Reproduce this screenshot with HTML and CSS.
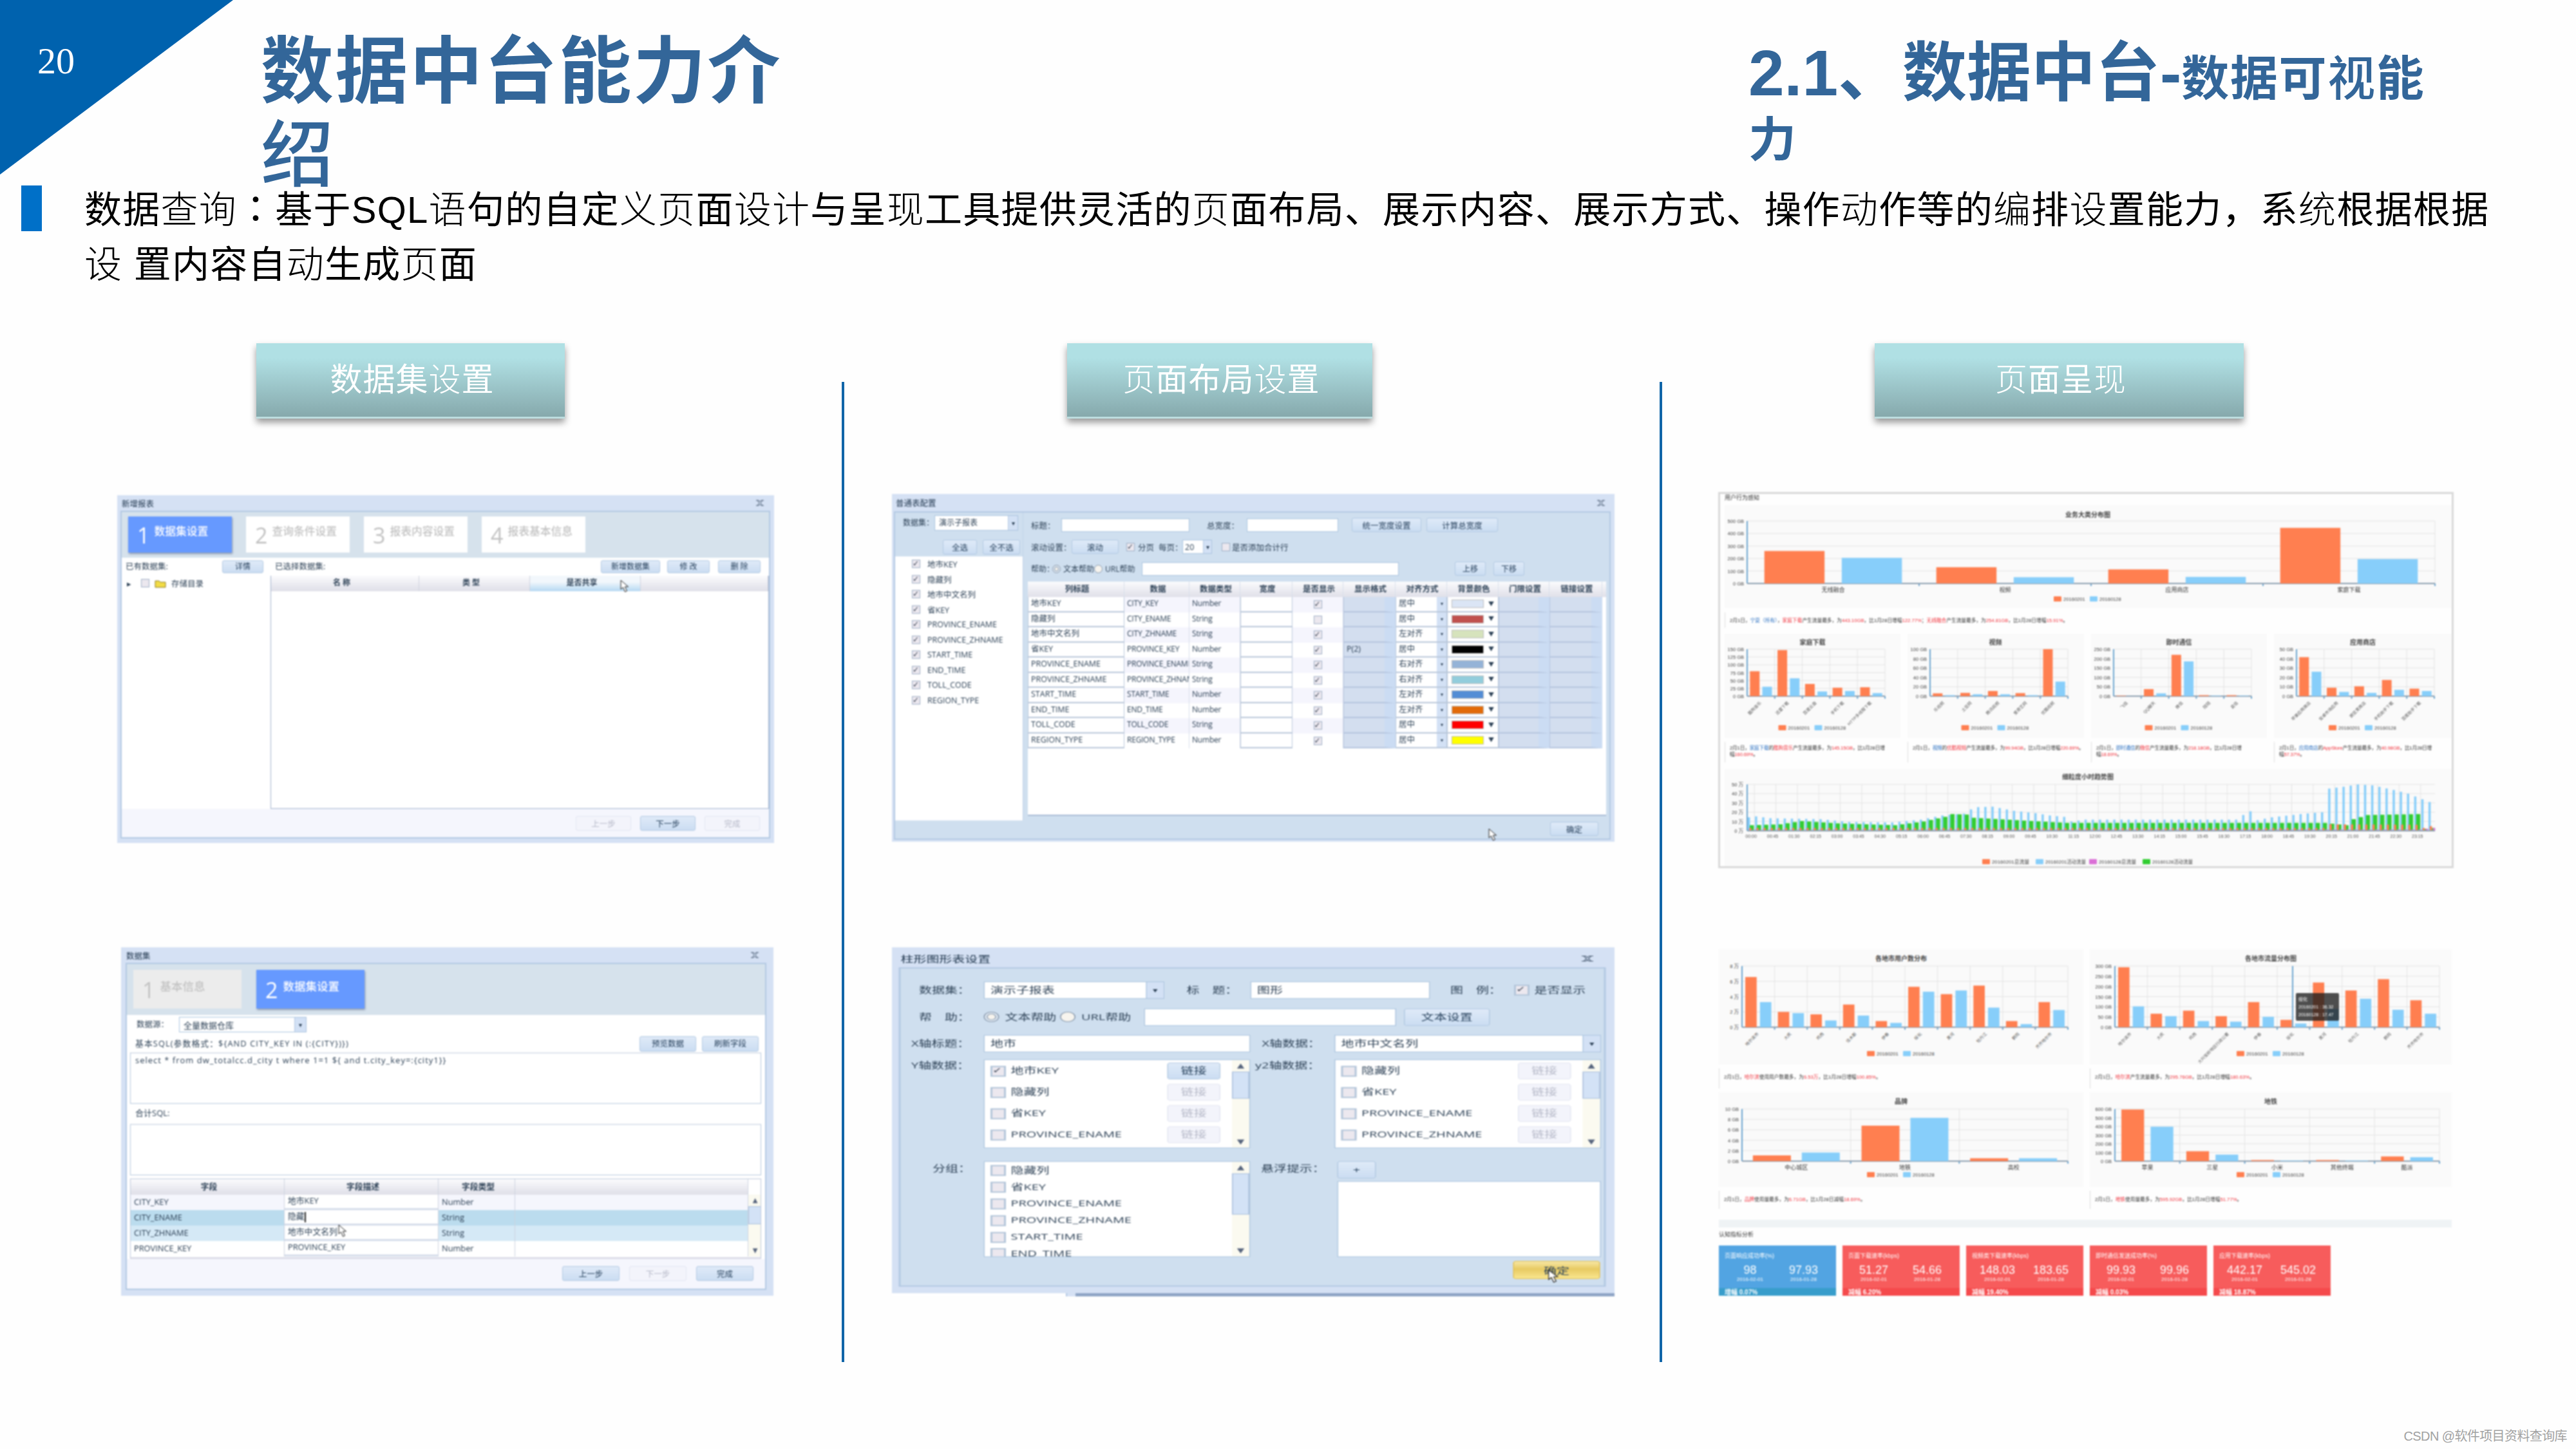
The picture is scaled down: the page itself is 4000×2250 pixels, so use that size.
FILE: index.html
```html
<!DOCTYPE html>
<html lang="zh-CN">
<head>
    <meta charset="UTF-8">
    <meta name="viewport" content="width=device-width, initial-scale=1.0">
    <title>数据中台能力介绍</title>
    <link rel="stylesheet" href="styles.css">
</head>
<body>
    <header class="top">
        <div class="corner">
            <svg width="362" height="271"><polygon points="0,0 362,0 0,271" fill="#0062ae"/></svg>
            <span class="page-no">20</span>
        </div>
        <h1>数据中台能力介<br><span class="lt">绍</span></h1>
        <h2>2.1、数据中台-<small>数据可<span class="lt">视</span>能<br>力</small></h2>
    </header>

    <section class="query">
        <span class="bullet"></span>
        <p>数据<span class="lt">查询</span><span class="colon" lang="zh-TW">：</span>基于SQL<span class="lt">语</span>句的自定<span class="lt">义页</span>面<span class="lt">设计</span>与呈<span class="lt">现</span>工具提供灵活的<span class="lt">页</span>面布局、展示内容、展示方式、操作<span class="lt">动</span>作等的<span class="lt">编</span>排<span class="lt">设</span>置能力，系<span class="lt">统</span>根据根据<br><span class="lt">设</span> 置内容自<span class="lt">动</span>生成<span class="lt">页</span>面</p>
    </section>

    <main class="board">
        <div class="col col-a">
            <div class="tag">数据集<span class="lt">设</span>置</div>

            <!-- 新增报表 -->
            <div class="shot dlg dlg1">
                <div class="bar"><span>新增报表</span><svg class="x" width="14" height="10" viewBox="0 0 14 10"><path d="M1 1h4l2 2 2-2h4M1 9h4l2-2 2 2h4M3 1l3 4-3 4M11 1L8 5l3 4"/></svg></div>
                <div class="inner">
                    <div class="steps">
                        <div class="step on"><b>1</b><span>数据集设置</span></div>
                        <div class="step"><b>2</b><span>查询条件设置</span></div>
                        <div class="step"><b>3</b><span>报表内容设置</span></div>
                        <div class="step"><b>4</b><span>报表基本信息</span></div>
                    </div>
                    <div class="tools">
                        <span>已有数据集:</span><span class="btn">详情</span>
                        <span>已选择数据集:</span>
                        <span class="btn">新增数据集</span><span class="btn">修 改</span><span class="btn">删 除</span>
                    </div>
                    <div class="panes">
                        <div class="tree"><i class="arrow">▸</i><i class="cb"></i>
                            <svg width="18" height="14"><path d="M1 3h6l2 2h8v8H1z" fill="#f3dc45" stroke="#8b7a20"/></svg>
                            <span>存储目录</span></div>
                        <div class="list">
                            <div class="th"><span>名 称</span><span>类 型</span><span class="hot">是否共享</span><span></span></div>
                        </div>
                    </div>
                    <div class="foot"><span class="btn off">上一步</span><span class="btn">下一步</span><span class="btn off">完成</span></div>
                </div>
                <svg class="cursor" width="16" height="20" viewBox="0 0 16 20"><path d="M1 1v14l3.500-3 3 7 3-1.300-3-6.700h5z" fill="#fff" stroke="#222"/></svg>
            </div>

            <!-- 数据集 -->
            <div class="shot dlg dlg2">
                <div class="bar"><span>数据集</span><svg class="x" width="14" height="10" viewBox="0 0 14 10"><path d="M1 1h4l2 2 2-2h4M1 9h4l2-2 2 2h4M3 1l3 4-3 4M11 1L8 5l3 4"/></svg></div>
                <div class="inner">
                    <div class="steps">
                        <div class="step gray"><b>1</b><span>基本信息</span></div>
                        <div class="step on"><b>2</b><span>数据集设置</span></div>
                    </div>
                    <div class="src"><span>数据源：</span><span class="select">全量数据仓库<i>▾</i></span></div>
                    <div class="sql-head"><span>基本SQL(参数格式：${AND CITY_KEY IN (:{CITY})})</span><span class="btn">预览数据</span><span class="btn">刷新字段</span></div>
                    <div class="area">select * from dw_totalcc.d_city t where 1=1 ${ and t.city_key=:{city1}}</div>
                    <div class="sum">合计SQL:</div>
                    <div class="area"></div>
                    <div class="fields">
                        <div class="frow fh"><span>字段</span><span>字段描述</span><span>字段类型</span><span></span></div>
                        <div class="frow f1"><span>CITY_KEY</span><span class="in">地市KEY</span><span>Number</span><span></span></div>
                        <div class="frow f2"><span>CITY_ENAME</span><span class="in caret">隐藏</span><span>String</span><span></span></div>
                        <div class="frow f3"><span>CITY_ZHNAME</span><span class="in">地市中文名列</span><span>String</span><span></span></div>
                        <div class="frow"><span>PROVINCE_KEY</span><span class="in">PROVINCE_KEY</span><span>Number</span><span></span></div>
                        <div class="vscroll"><i>▲</i><b></b><i>▼</i></div>
                    </div>
                    <div class="foot"><span class="btn">上一步</span><span class="btn off">下一步</span><span class="btn">完成</span></div>
                </div>
                <svg class="cursor" width="16" height="20" viewBox="0 0 16 20"><path d="M1 1v14l3.500-3 3 7 3-1.300-3-6.700h5z" fill="#fff" stroke="#222"/></svg>
            </div>
        </div>

        <div class="rule"></div>

        <div class="col col-b">
            <div class="tag"><span class="lt">页</span>面布局<span class="lt">设</span>置</div>

            <!-- 普通表配置 -->
            <div class="shot dlg dlg3">
                <div class="bar"><span>普通表配置</span><svg class="x" width="14" height="10" viewBox="0 0 14 10"><path d="M1 1h4l2 2 2-2h4M1 9h4l2-2 2 2h4M3 1l3 4-3 4M11 1L8 5l3 4"/></svg></div>
                <div class="inner">
                    <div class="side">
                        <div class="pick"><span>数据集：</span><span class="select">演示子报表<i>▾</i></span></div>
                        <div class="all"><span class="btn">全选</span><span class="btn">全不选</span></div>
                        <ul id="keys"></ul>
                    </div>
                    <div class="conf">
                        <div class="r1"><span>标题：</span><i class="input"></i><span>总宽度：</span><i class="input"></i><span class="btn">统一宽度设置</span><span class="btn">计算总宽度</span></div>
                        <div class="r2"><span>滚动设置：</span><span class="btn">滚动</span><i class="cb ok"></i><span>分页</span><span>每页：</span><span class="select">20<i>▾</i></span><i class="cb"></i><span>是否添加合计行</span></div>
                        <div class="r3"><span>帮助：</span><i class="radio on"></i><span>文本帮助</span><i class="radio"></i><span>URL帮助</span><i class="input"></i><span class="btn">上移</span><span class="btn">下移</span></div>
                        <div class="cols" id="cols"></div>
                        <div class="done"><span class="btn">确定</span></div>
                    </div>
                </div>
                <svg class="cursor" width="16" height="20" viewBox="0 0 16 20"><path d="M1 1v14l3.500-3 3 7 3-1.300-3-6.700h5z" fill="#fff" stroke="#222"/></svg>
            </div>

            <!-- 柱形图形表设置: laid out at 748px and stretched to 1122px -->
            <div class="shot wide">
                <div class="dlg dlg4">
                    <div class="bar"><span>柱形图形表设置</span><svg class="x" width="14" height="11" viewBox="0 0 14 10"><path d="M1 1h4l2 2 2-2h4M1 9h4l2-2 2 2h4M3 1l3 4-3 4M11 1L8 5l3 4"/></svg></div>
                    <div class="inner">
                        <div class="g g1"><span>数据集：</span><span class="select">演示子报表<i>▾</i></span><span>标　题：</span><span class="input">图形</span><span>图　例：</span><i class="cb ok"></i><span>是否显示</span></div>
                        <div class="g g2"><span>帮　助：</span><i class="radio on"></i><span>文本帮助</span><i class="radio"></i><span>URL帮助</span><span class="input"></span><span class="btn">文本设置</span></div>
                        <div class="g g3"><span>X轴标题：</span><span class="input">地市</span><span>X轴数据：</span><span class="select">地市中文名列<i>▾</i></span></div>
                        <div class="g g4">
                            <span>Y轴数据：</span>
                            <div class="lb">
                                <ul><li><i class="cb ok"></i>地市KEY<span class="btn">链接</span></li><li><i class="cb"></i>隐藏列<span class="btn off">链接</span></li><li><i class="cb"></i>省KEY<span class="btn off">链接</span></li><li><i class="cb"></i>PROVINCE_ENAME<span class="btn off">链接</span></li></ul>
                                <div class="vscroll"><i>▲</i><b></b><i>▼</i></div>
                            </div>
                            <span>y2轴数据：</span>
                            <div class="lb">
                                <ul><li><i class="cb"></i>隐藏列<span class="btn off">链接</span></li><li><i class="cb"></i>省KEY<span class="btn off">链接</span></li><li><i class="cb"></i>PROVINCE_ENAME<span class="btn off">链接</span></li><li><i class="cb"></i>PROVINCE_ZHNAME<span class="btn off">链接</span></li></ul>
                                <div class="vscroll"><i>▲</i><b></b><i>▼</i></div>
                            </div>
                        </div>
                        <div class="g g5">
                            <span>分组：</span>
                            <div class="lb">
                                <ul><li><i class="cb"></i>隐藏列</li><li><i class="cb"></i>省KEY</li><li><i class="cb"></i>PROVINCE_ENAME</li><li><i class="cb"></i>PROVINCE_ZHNAME</li><li><i class="cb"></i>START_TIME</li><li><i class="cb"></i>END_TIME</li></ul>
                                <div class="vscroll"><i>▲</i><b></b><i>▼</i></div>
                            </div>
                            <span>悬浮提示：</span>
                            <div class="tip"><span class="btn">+</span><div class="box"></div></div>
                        </div>
                        <div class="done"><span class="btn gold">确定</span></div>
                    </div>
                    <svg class="cursor" width="13" height="21" viewBox="0 0 16 20" preserveAspectRatio="none"><path d="M1 1v14l3.500-3 3 7 3-1.300-3-6.700h5z" fill="#fff" stroke="#222"/></svg>
                </div>
                <div class="under"><i></i><b></b></div>
            </div>
        </div>

        <div class="rule"></div>

        <div class="col col-c">
            <div class="tag"><span class="lt">页</span>面呈<span class="lt">现</span></div>

            <div class="shot rep rep1">
                <p class="cap">用户行为感知</p>
                <div class="card" id="c1"></div>
                <p class="note">2月1日，<em>宁夏（所有）</em>，<b>家庭下载</b>产生流量最多，为<b>443.10GB</b>，比1月28日增幅<b>122.77%</b>；<b>无线融合</b>产生流量最多，为<b>254.81GB</b>，比1月28日增幅<b>15.91%</b>。</p>
                <div class="four">
                    <div class="card" id="c2"></div><div class="card" id="c3"></div><div class="card" id="c4"></div><div class="card" id="c5"></div>
                    <p class="note">2月1日，<em>家庭下载</em>的<b>酷狗音乐</b>产生流量最多，为<b>145.15GB</b>，比1月28日增<br>幅<b>160.69%</b>。</p>
                    <p class="note">2月1日，<em>视频</em>的<b>优酷视频</b>产生流量最多，为<b>99.94GB</b>，比1月28日增幅<b>220.69%</b>。</p>
                    <p class="note">2月1日，<em>即时通信</em>的<b>微信</b>产生流量最多，为<b>218.18GB</b>，比1月28日增<br>幅<b>18.69%</b>。</p>
                    <p class="note">2月1日，<em>应用商店</em>的<b>AppStore</b>产生流量最多，为<b>40.98GB</b>，比1月28日增<br>幅<b>57.37%</b>。</p>
                </div>
                <div class="card" id="c6"></div>
            </div>

            <div class="shot rep rep2">
                <div class="two">
                    <div class="card" id="d1"></div><div class="card" id="d2"></div>
                    <p class="note">2月1日，<b>哈尔滨</b>使用用户数最多，为<b>6.53万</b>，比1月28日增幅<b>100.85%</b>。</p>
                    <p class="note">2月1日，<b>哈尔滨</b>产生流量最多，为<b>295.76GB</b>，比1月28日增幅<b>180.63%</b>。</p>
                    <div class="card" id="d3"></div><div class="card" id="d4"></div>
                    <p class="note">2月1日，<b>品牌</b>使用量最多，为<b>6.71GB</b>，比1月28日减幅<b>18.69%</b>。</p>
                    <p class="note">2月1日，<b>地铁</b>使用量最多，为<b>595.92GB</b>，比1月28日增幅<b>51.77%</b>。</p>
                </div>
                <div class="band"></div>
                <p class="cap">认知指标分析</p>
                <div class="kpis" id="kpis"></div>
                <div class="hover"><span>绥化</span><span>20160201 : 36.32</span><span>20160128 : 17.47</span></div>
            </div>
        </div>
    </main>

    <footer>CSDN @软件项目资料查询库</footer>

    <script src="script.js"></script>
</body>
</html>
```
FILE: styles.css
```css
* { box-sizing: border-box; }
body {
    margin: 0;
    width: 4000px;
    height: 2250px;
    overflow: hidden;
    background: #fefefe;
    font-family: "Liberation Sans", "Noto Sans CJK SC", sans-serif;
    color: #000;
}
p, ul, h1, h2 { margin: 0; padding: 0; }
ul { list-style: none; }
i, em { font-style: normal; }
.lt { font-weight: 300; }

/* header */
.top { display: flex; height: 284px; color: #336699; }
.corner { position: relative; width: 405px; }
.corner svg { display: block; }
.page-no {
    position: absolute;
    left: 58px;
    top: 62px;
    font: 58px/66px "Liberation Serif", serif;
    color: #fff;
}
h1 { width: 2310px; padding-top: 36px; font-size: 113px; line-height: 130px; letter-spacing: 2.6px; font-weight: 700; font-family: "Noto Sans CJK SC", sans-serif; white-space: nowrap; }
h1 .lt, h2 .lt { font-weight: 500; }
h2 { padding-top: 66px; font-size: 100px; line-height: 95px; font-weight: 700; white-space: nowrap; }
h2 small { font-size: 74px; line-height: 60px; letter-spacing: 1.6px; }

.query { display: flex; height: 169px; padding-left: 33px; }
.bullet { width: 32px; height: 71px; margin: 4px 66px 0 0; background: #0070c8; }
.query p { margin-top: -5px; font-size: 58px; line-height: 84.5px; letter-spacing: 1.25px; white-space: nowrap; }
.colon { font-family: "Noto Sans CJK TC", sans-serif; }

/* three columns */
.board { display: grid; grid-template-columns: 1307px 4px 1266px 4px 1fr; height: 1582px; margin-top: 80px; }
.rule { margin-top: 60px; background: #1065a8; }
.col { display: flex; flex-direction: column; align-items: flex-start; }
.tag {
    height: 117px;
    line-height: 115px;
    padding-left: 5px;
    text-align: center;
    font-size: 50px;
    letter-spacing: 1px;
    color: #fff;
    background: linear-gradient(#b0e0e4 20%, #86a9ac);
    border-bottom: 3px solid #bcdcde;
    box-shadow: 0 6px 10px rgba(0, 0, 0, .4);
}
.col-a .tag { width: 479px; margin: 0 0 119px 398px; }
.col-b .tag { width: 474px; margin: 0 0 117px 346px; }
.col-c .tag { width: 573px; margin: 0 0 114px 330px; }
.shot { position: relative; filter: blur(.9px); }
.cursor { position: absolute; }

footer { margin: 99px 14px 0 0; text-align: right; font-size: 20px; line-height: 32px; letter-spacing: -.6px; color: #a2a2a2; }

/* dialogs */
.dlg { display: flex; flex-direction: column; background: #d5e1f4; font: 12.5px "Open Sans", "Noto Sans CJK SC", sans-serif; color: #2e4257; white-space: nowrap; }
.dlg .bar { display: flex; justify-content: space-between; align-items: center; color: #22384f; }
.dlg .x path { fill: none; stroke: #4a5d74; }
.inner { display: flex; flex-direction: column; border: 2px solid #b3c9e3; }
.btn {
    display: flex;
    align-items: center;
    justify-content: center;
    border: 1px solid #b2c9e2;
    border-radius: 3px;
    background: linear-gradient(#dfeaf8, #cbddf2);
    color: #27415c;
}
.btn.off { background: #f3f4fb; border-color: #e3e6f2; color: #b6b9c8; }
.select, .input { display: flex; align-items: center; justify-content: space-between; background: #fff; border: 1px solid #a9c3de; padding-left: 6px; }
.select i { display: flex; align-items: center; justify-content: center; width: 18px; height: 100%; font-size: 10px; background: #d3e1f5; border-left: 1px solid #b2c9e2; }
.cb { display: block; width: 13px; height: 13px; border: 1px solid #9eaec4; background: #ece8ef; }
.cb.ok::after { content: "✓"; display: block; font: bold 12px/11px "DejaVu Sans", sans-serif; color: #333c4d; }
.radio { display: block; width: 13px; height: 13px; border: 1px solid #8798ac; border-radius: 50%; background: #f7f4ee; }
.radio.on { box-shadow: inset 0 0 0 2px #e3ecf6, inset 0 0 0 3px #8798ac; }
.vscroll { display: flex; flex-direction: column; align-items: center; background: #fbfaf0; }
.vscroll i { font: 10px/18px "DejaVu Sans", sans-serif; color: #56647d; }
.vscroll b { width: 100%; background: #d3e2f6; border: 1px solid #a9bedb; }
.vscroll i:last-child { margin-top: auto; }
.steps { display: flex; background: #d6e2ec; }
.step { display: flex; background: #fff; color: #c3c3c3; }
.step b { font: 34px "Open Sans", sans-serif; }
.step span { font-size: 16.8px; font-weight: 500; }
.step.on { background: #6699ff; color: #fff; box-shadow: 1px 2px 3px #8795ae; }
.step.gray { background: #ececec; }
.foot { display: flex; background: #f5f6fd; flex: 1; }
.foot .btn { height: 23px; }

.dlg1 { width: 1020px; height: 540px; margin-left: 182px; }
.dlg1 .bar { height: 24px; padding: 0 15px 0 7px; }
.dlg1 .inner { height: 509px; margin: 0 6px 0 5px; background: #fff; }
.dlg1 .steps { height: 71px; padding: 7px 0 0 10px; gap: 22px; }
.dlg1 .step { width: 161px; height: 56px; padding-left: 14px; gap: 7px; }
.dlg1 .step b { line-height: 58px; }
.dlg1 .step span { line-height: 46px; }
.dlg1 .tools { display: grid; grid-template-columns: 150px 64px 18px 506px 92px 11px 66px 13px 66px; height: 28px; padding: 4px 0 4px 6px; font-size: 12.5px; line-height: 20px; }
.dlg1 .tools .btn { height: 20px; font-size: 12px; }
.dlg1 .tools span:nth-child(3) { grid-column: 4; }
.dlg1 .tools span:nth-child(5) { grid-column: 7; }
.dlg1 .tools span:nth-child(6) { grid-column: 9; }
.dlg1 .panes { display: flex; height: 362px; }
.dlg1 .tree { display: flex; align-items: flex-start; gap: 8px; width: 231px; padding: 5px 0 0 8px; line-height: 16px; font-size: 12.5px; }
.dlg1 .tree .arrow { width: 14px; }
.dlg1 .list { flex: 1; border: 1px solid #9fb0cb; border-top: 0; }
.dlg1 .th { display: grid; grid-template-columns: 230px 172px 172px 1fr; height: 24px; line-height: 22px; text-align: center; background: linear-gradient(#fbfbfd, #dfdfe8); font-weight: 600; font-size: 12px; }
.dlg1 .th span { padding-right: 10px; border-right: 1px solid #cfd2de; }
.dlg1 .th .hot { background: linear-gradient(#f2f7fc 40%, #b5d8f2); }
.dlg1 .foot { padding: 11px 0 0 705px; gap: 14px; }
.dlg1 .foot .btn { width: 86px; }
.dlg1 .cursor { left: 781px; top: 131px; }

.dlg2 { width: 1013px; height: 541px; margin: 162px 0 0 188px; }
.dlg2 .bar { height: 24px; padding: 0 22px 0 8px; }
.dlg2 .inner { height: 508px; margin: 0 11px 0 7px; background: #fff; }
.dlg2 .steps { height: 79px; padding: 9px 0 0 10px; gap: 23px; }
.dlg2 .step { width: 168px; height: 60px; padding-left: 14px; gap: 8px; }
.dlg2 .step b { line-height: 62px; }
.dlg2 .step span { line-height: 50px; font-size: 17.500px; }
.dlg2 .src { display: flex; height: 32px; padding: 3px 0 0 15px; }
.dlg2 .src > span:first-child { width: 66px; line-height: 24px; }
.dlg2 .src .select { width: 198px; height: 24px; font-size: 13px; }
.dlg2 .sql-head { display: flex; gap: 9px; height: 26px; padding: 1px 10px 1px 13px; line-height: 22px; }
.dlg2 .sql-head > span:first-child { flex: 1; font-size: 12.8px; letter-spacing: 1.1px; }
.dlg2 .sql-head .btn { width: 88px; }
.dlg2 .area { height: 80px; margin: 0 6px 0 5px; padding: 1px 7px; border: 1px solid #b3c6dd; border-top: 2px solid #dde3ec; font-size: 13px; letter-spacing: 1px; }
.dlg2 .sum { height: 31px; padding: 4px 0 0 13px; font-size: 13px; }
.dlg2 .fields { display: grid; grid-template: 24px repeat(4, 24px) / 959px 21px; height: 125px; margin: 5px 6px 0 5px; border: 1px solid #bcc7da; border-bottom: 3px solid #dcdde8; overflow: hidden; }
.dlg2 .frow { display: grid; grid-template-columns: 239px 239px 119px 1fr; grid-column: 1; line-height: 22px; font-size: 12.8px; }
.dlg2 .frow span { padding-left: 5px; border-right: 1px solid #cdd3e0; }
.dlg2 .fh { background: linear-gradient(#fbfbfd, #dfdfe8); font-weight: 600; text-align: center; }
.dlg2 .f1 { background: #f5f6fd; }
.dlg2 .f2 { background: #bbdcee; }
.dlg2 .f3 { background: #d5e9f6; }
.dlg2 .frow .in { background: #fff; border-bottom: 3px solid #d5dcea; line-height: 19px; }
.dlg2 .caret::after { content: ""; display: inline-block; height: 16px; border-left: 2px solid #222; vertical-align: middle; }
.dlg2 .vscroll { grid-area: 2 / 2 / 6 / 3; }
.dlg2 .vscroll b { height: 28px; }
.dlg2 .foot { padding: 11px 0 0 676px; gap: 15px; }
.dlg2 .foot .btn { width: 89px; }
.dlg2 .cursor { left: 337px; top: 430px; }

.dlg3 { width: 1122px; height: 540px; margin-left: 74px; font-size: 12.5px; }
.dlg3 .bar { height: 27px; padding: 0 14px 0 6px; }
.dlg3 .inner { flex-direction: row; height: 510px; margin: 0 6px 0 3px; background: #cfdfef; }
.side { width: 199px; height: 478px; display: flex; flex-direction: column; border-right: 1px solid #bfd2e6; }
.side .pick { display: flex; height: 42px; padding: 4px 0 0 12px; line-height: 24px; font-size: 12px; }
.side .pick .select { width: 130px; height: 24px; margin-left: 1px; }
.side .pick .select i { width: 15px; }
.side .all { display: flex; gap: 9px; height: 26px; padding: 0 0 3px 74px; }
.side .all .btn { width: 53px; }
.side .all .btn + .btn { width: 58px; }
.side ul { flex: 1; background: #fff; }
.side li { display: flex; align-items: center; gap: 11px; height: 23.5px; padding-left: 26px; }
.conf { flex: 1; display: flex; flex-direction: column; padding: 2px 5px 0 7px; }
.conf .r1, .conf .r2, .conf .r3 { display: grid; align-items: center; height: 34px; padding-left: 5px; }
.conf .input { height: 21px; }
.conf .btn { height: 22px; }
.conf .r1 { grid-template-columns: 47px 199px 27px 62px 142px 21px 108px 8px 111px; }
.conf .r1 span:nth-child(3) { grid-column: 4; }
.conf .r1 span:nth-child(5) { grid-column: 7; }
.conf .r1 span:nth-child(6) { grid-column: 9; }
.conf .r2 { grid-template-columns: 63px 73px 12px 18px 32px 35px 48px 15px 16px 1fr; }
.conf .r2 i:nth-child(3) { grid-column: 4; }
.conf .r2 i:nth-child(7) { grid-column: 9; }
.conf .r2 .select { height: 22px; padding-left: 3px; margin-left: 2px; }
.conf .r2 .select i { width: 13px; }
.conf .r3 { grid-template-columns: 33px 17px 48px 17px 57px 399px 87px 48px 12px 48px; font-size: 12px; }
.conf .r3 span:nth-child(7) { grid-column: 8; }
.conf .r3 span:nth-child(8) { grid-column: 10; }
.cols { height: 364px; margin-top: 3px; background: #fff; border-bottom: 2px solid #a9bcd4; }
.crow { display: grid; grid-template-columns: 150px 101px 79px 81px 79px 81px 80px 80px 79px 82px; height: 23.5px; line-height: 20px; }
.crow > * { padding-left: 4px; border: 1px solid #d8dfeb; border-width: 0 1px 0 0; overflow: hidden; }
.crow > .ro { font-size: 12px; letter-spacing: -.2px; }
.crow:nth-child(even) > .ro { background: #f5f5fd; }
.crow.head { height: 24px; line-height: 23px; font-weight: 600; text-align: center; background: linear-gradient(#fbfbfd, #e0e0e9); }
.crow .ed { background: #fff; border: 1px solid #b9c7da; border-width: 0 1px 2px; }
.crow .dis { background: #d3deef; border: 1px solid #b4c4de; border-width: 0 1px 2px; border-right: 17px solid #cbdcf3; }
.crow .al { display: flex; justify-content: space-between; }
.crow .al i { width: 15px; text-align: center; font-size: 8px; background: #d3e1f5; }
.crow .ck { display: flex; align-items: center; justify-content: center; padding: 0; }
.crow .clr { display: flex; align-items: center; gap: 7px; padding-left: 6px; font-size: 9px; }
.crow .clr svg { border: 1px solid rgba(90, 90, 90, .4); }
.dlg3 .done { display: flex; justify-content: flex-end; padding: 9px 12px 0 0; }
.dlg3 .done .btn { width: 75px; }
.dlg3 .cursor { left: 926px; top: 519px; }

/* stretched window */
.wide { width: 1122px; height: 542px; margin: 164px 0 0 74px; }
.dlg4 { width: 748px; height: 537px; font-size: 13.3px; transform: scaleX(1.5); transform-origin: 0 0; }
.dlg4 .bar { height: 31px; padding: 4px 21px 0 9px; }
.dlg4 .inner { height: 496px; margin: 0 9px 0 7px; background: #cfdfef; padding-top: 20px; }
.g { display: grid; height: 42px; align-items: start; line-height: 27px; }
.g .input, .g .select, .g2 .btn { height: 27px; }
.dlg4 .cb { width: 16px; height: 17px; border: 2px solid #b4c6da; flex: none; }
.dlg4 .g > .cb, .dlg4 .g > .radio { margin-top: 5px; }
.dlg4 .radio { width: 16px; height: 16px; }
.g1 { grid-template-columns: 67px 187px 23px 66px 186px 21px 66px 21px 1fr; padding-left: 19px; }
.g1 span:nth-child(3) { grid-column: 4; }
.g1 span:nth-child(5) { grid-column: 7; }
.g2 { grid-template-columns: 67px 22px 57px 22px 65px 261px 8px 89px; padding-left: 19px; height: 41px; }
.g2 .btn { grid-column: 8; }
.g3 { grid-template-columns: 75px 276px 12px 75px 276px; padding-left: 11px; height: 38px; }
.g3 span:nth-child(3) { grid-column: 4; }
.g4 { grid-template-columns: 75px 276px 5px 82px 276px; padding-left: 11px; height: 158px; }
.g4 > span { margin-top: -4px; }
.g5 > span { margin-top: -2px; }
.g4 > span:nth-child(3), .g5 > span:nth-child(3) { grid-column: 4; }
.g5 { grid-template-columns: 53px 276px 11px 79px 273px; padding-left: 33px; height: 155px; }
.g5 > .lb { height: 149px; }
.lb { display: flex; height: 138px; background: #fff; border: 1px solid #a9c3de; }
.lb ul { flex: 1; overflow: hidden; }
.lb li { display: flex; align-items: center; gap: 5px; height: 33px; padding: 0 12px 0 6px; }
.g5 .lb li { height: 25.800px; line-height: 20px; }
.lb .cb { margin-top: 2px; }
.lb .btn { width: 55px; height: 26px; margin-left: auto; }
.lb .vscroll { width: 18px; }
.lb .vscroll b { height: 42px; }
.g5 .lb .vscroll b { height: 64px; }
.tip .btn { width: 40px; height: 27px; }
.tip .box { height: 118px; margin-top: 4px; background: #fff; border: 1px solid #a9c3de; }
.dlg4 .done { display: flex; justify-content: flex-end; padding-right: 4px; }
.dlg4 .done .btn { width: 90px; height: 28px; }
.btn.gold { background: linear-gradient(#f7e7a4, #e8ca62 45%, #f9e68f); border-color: #e5c04d; }
.dlg4 .cursor { left: 679px; top: 500px; }
.under { display: flex; height: 5px; background: #8fa5c5; }
.under i { width: 272px; background: #fff; border-right: 2px solid #b3c9e3; }
.under b { width: 13px; background: #d5e1f4; }

/* report pages */
.rep { font-family: "Liberation Sans", "Noto Sans CJK SC", sans-serif; color: #333; }
.rep .card { background: #fafafa; }
.rep svg { display: block; }
.rep .cap { font-size: 9px; line-height: 12px; }
.note { padding-left: 7px; border-left: 1px solid #ddd; font-size: 7.7px; line-height: 10px; white-space: nowrap; }
.note b { color: #f0323c; font-weight: 400; }
.note em { color: #2a6fc0; }
.rep1 { width: 1142px; height: 584px; margin-left: 87px; padding: 0 0 0 7px; border: 3px solid #d9d9d9; background: #fefefe; }
.rep1 .cap { height: 17px; }
.rep1 > .note { height: 24px; margin: 7px 0 9px; line-height: 25px; }
.rep1 .four { display: grid; grid-template-columns: 273px 274px 273px 276px; column-gap: 11px; row-gap: 6px; grid-template-rows: 162px 32px; margin-bottom: 10px; }
.rep1 .four .note { padding-top: 5px; letter-spacing: -.2px; }
.rep2 { width: 1138px; height: 538px; margin: 126px 0 0 88px; overflow: hidden; }
.rep2 .two { display: grid; grid-template-columns: 566px 562px; grid-template-rows: 179px 31px 147px 28px; column-gap: 10px; row-gap: 6px; height: 420px; }
.rep2 .note { line-height: 28px; }
.rep2 .band { height: 12px; background: #eff3f5; }
.rep2 .cap { height: 28px; padding-top: 5px; }
.kpis { display: flex; gap: 10px; }
.kpi { width: 182px; height: 78px; background: #f75c5c; color: #fff; }
.kpi.blue { background: #52a4e2; }
.kpi p { padding: 10px 0 0 9px; font-size: 9px; line-height: 13px; }
.kpi div { display: grid; grid-template-columns: 1fr 1fr; padding: 5px 9px 0 7px; text-align: center; font-size: 8px; line-height: 9px; height: 43px; }
.kpi div b { display: block; font-size: 18px; line-height: 20px; font-weight: 400; }
.kpi footer { margin: 0; padding-left: 9px; text-align: left; font-size: 10px; line-height: 14px; letter-spacing: 0; color: #fff; background: #f54a4c; font-weight: 700; }
.kpi.blue footer { background: #389dcb; }
.hover { position: absolute; left: 896px; top: 68px; width: 67px; height: 43px; padding: 4px; display: flex; flex-direction: column; font-size: 7px; line-height: 12px; color: #fff; background: rgba(30, 30, 30, .78); border-radius: 2px; white-space: nowrap; }

/* chart parts */
.c-title { font-size: 10px; font-weight: 700; fill: #444; text-anchor: middle; }
.c-tick { font-size: 7.5px; fill: #444; text-anchor: end; }
.c-cat { font-size: 9px; fill: #333; text-anchor: middle; }
.c-rot { font-size: 6.5px; fill: #555; text-anchor: end; }
.c-leg { font-size: 7.6px; fill: #444; }
.c-slot { font-size: 7px; fill: #555; text-anchor: middle; }
.grid { stroke: #e3e3e3; }
.axis { stroke: #6ba5cf; stroke-width: 2; }
.base { stroke: #8d9fb0; stroke-width: 2; }
.or { fill: #ff7f50; }
.bl { fill: #87cefa; }
.gr { fill: #32cd32; }
.mg { fill: #da70d6; }
```
FILE: script.js
```js
// grouped bar chart: x0,y0,x1,y1 is the plot area, values are fractions of its height
function bars(id, c) {
    const pw = c.x1 - c.x0, ph = c.y1 - c.y0, n = c.cats.length, cw = pw / n;
    let s = `<text class="c-title" x="${c.w / 2}" y="${c.ty + 4}">${c.title}</text>`;
    c.ticks.forEach((t, i) => {
        const y = c.y1 - ph * i / (c.ticks.length - 1);
        s += `<line class="grid" x1="${c.x0}" x2="${c.x1}" y1="${y}" y2="${y}"/>`;
        s += `<text class="c-tick" x="${c.x0 - 5}" y="${y + 3}">${t}</text>`;
    });
    for (let i = 1; i <= n; i++) {
        const x = c.x0 + cw * i;
        if (!c.plain || i === n) s += `<line class="grid" x1="${x}" x2="${x}" y1="${c.y0}" y2="${c.y1}"/>`;
        s += `<line class="axis" x1="${x}" x2="${x}" y1="${c.y1}" y2="${c.y1 + 4}"/>`;
    }
    s += `<line class="axis" x1="${c.x0}" x2="${c.x0}" y1="${c.y0}" y2="${c.y1}"/>`;
    s += `<line class="base" x1="${c.x0}" x2="${c.x1}" y1="${c.y1}" y2="${c.y1}"/>`;
    c.cats.forEach((name, i) => {
        const x = c.x0 + cw * i;
        ['or', 'bl'].forEach((k, j) => {
            const h = c[k][i] * ph;
            s += `<rect class="${k}" x="${x + cw * (.1 + .45 * j)}" y="${c.y1 - h}" width="${cw * .35}" height="${h}"/>`;
        });
        const cx = x + cw / 2;
        if (c.rot) s += `<text class="c-rot" transform="translate(${cx + 1} ${c.y1 + 11}) rotate(-45)">${name}</text>`;
        else s += `<text class="c-cat" x="${cx}" y="${c.y1 + 13}">${name}</text>`;
    });
    const lx = c.w / 2 - 53;
    s += `<rect class="or" x="${lx}" y="${c.ly - 4}" width="12" height="8" rx="1"/><text class="c-leg" x="${lx + 15}" y="${c.ly + 3}">20160201</text>`;
    s += `<rect class="bl" x="${lx + 56}" y="${c.ly - 4}" width="12" height="8" rx="1"/><text class="c-leg" x="${lx + 71}" y="${c.ly + 3}">20160128</text>`;
    if (c.mark) s += `<line class="axis" x1="${c.mark}" x2="${c.mark}" y1="${c.y0}" y2="${c.y1}"/>`;
    document.getElementById(id).innerHTML = `<svg width="${c.w}" height="${c.h}">${s}</svg>`;
}

const gb = (...a) => a.map(v => v + ' GB');

bars('c1', {
    w: 1128, h: 160, x0: 35, y0: 25, x1: 1103, y1: 122, ty: 15, ly: 146, plain: true, title: '业务大类分布图',
    ticks: gb(0, 100, 200, 300, 400, 500), cats: ['无线融合', '视频', '应用商店', '家庭下载'],
    or: [.52, .26, .225, .89], bl: [.41, .1, .105, .39]
});

const small = { w: 273, h: 162, x0: 35, y0: 24, x1: 249, y1: 97, ty: 13, ly: 146, rot: true };
bars('c2', { ...small, title: '家庭下载', ticks: gb(0, 25, 50, 75, 100, 125, 150),
    cats: ['酷狗音乐', '迅雷下载', '百度云盘', '手机下载', 'HTTP多线程下载'],
    or: [.53, .98, .26, .18, .19], bl: [.2, .38, .1, .11, .065] });
bars('c3', { ...small, title: '视频', ticks: gb(0, 20, 40, 60, 80, 100),
    cats: ['乐视频', '土豆网', '腾讯视频', '爱奇艺网', '优酷视频'],
    or: [.06, .07, .11, .065, 1], bl: [.02, .04, .04, .02, .31] });
bars('c4', { ...small, title: '即时通信', ticks: gb(0, 50, 100, 150, 200, 250),
    cats: ['飞信', 'QQ聊天', '微信', '陌陌', '易信'],
    or: [.01, .15, .88, .02, .02], bl: [0, .06, .74, .01, .01] });
bars('c5', { ...small, w: 276, title: '应用商店', ticks: gb(0, 10, 20, 30, 40, 50),
    cats: ['苹果应用商店', '安卓市场应用', '豌豆荚商店', '手机助手下载', '百度助手下载'],
    or: [.83, .18, .21, .345, .16], bl: [.52, .09, .07, .135, .11] });

// 24h curve, 96 slots; key points are [slot, fraction]
function curve(pts, i) {
    for (let k = 1; k < pts.length; k++) {
        const [a, va] = pts[k - 1], [b, vb] = pts[k];
        if (i <= b) return va + (vb - va) * (i - a) / (b - a);
    }
    return pts[pts.length - 1][1];
}
const total = {
    bl: [[0, .29], [1, .31], [3, .27], [10, .25], [14, .19], [20, .18], [24, .24], [27, .33], [30, .37], [31, .46], [32, .51], [34, .52], [37, .43], [40, .38], [42, .33], [44, .3], [45, .2], [47, .24], [68, .24], [69, .34], [70, .42], [71, .23], [73, .29], [77, .36], [80, .4], [81, .91], [83, .95], [85, 1], [87, .98], [90, .88], [92, .8], [95, .62]],
    gr: [[0, .12], [4, .14], [7, .21], [12, .16], [20, .12], [24, .2], [27, .3], [28, .36], [30, .35], [31, .28], [38, .22], [44, .17], [80, .17], [83, .12], [84, .25], [86, .34], [93, .36], [94, .04], [95, .06]],
    or: [[0, .06], [80, .06], [81, .14], [93, .13], [94, .06], [95, .1]],
    mg: [[0, .02], [93, .03], [95, .06]]
};
(function () {
    const x0 = 35, x1 = 1103, y0 = 24, y1 = 96, cw = (x1 - x0) / 96;
    let s = `<text class="c-title" x="564" y="16">细粒度小时趋势图</text>`;
    for (let i = 0; i < 6; i++) {
        const y = y1 - (y1 - y0) * i / 5;
        s += `<line class="grid" x1="${x0}" x2="${x1}" y1="${y}" y2="${y}"/><text class="c-tick" x="${x0 - 6}" y="${y + 3}">${i * 10} 万</text>`;
    }
    for (let i = 0; i < 96; i += 3) {
        const x = x0 + cw * (i + 1), m = i * 15;
        s += `<line class="grid" x1="${x}" x2="${x}" y1="${y0}" y2="${y1}"/>`;
        s += `<text class="c-slot" x="${x - 5}" y="${y1 + 11}">${String(m / 60 | 0).padStart(2, '0')}:${String(m % 60).padStart(2, '0')}</text>`;
    }
    s += `<line class="axis" x1="${x0}" x2="${x0}" y1="${y0}" y2="${y1}"/>`;
    for (let i = 0; i < 96; i++) {
        [['bl', 1], ['gr', 4], ['or', 3], ['mg', 8]].forEach(([k, dx]) => {
            const h = curve(total[k], i) * (y1 - y0);
            s += `<rect class="${k}" x="${x0 + cw * i + dx}" y="${y1 - h}" width="${k === 'gr' ? 6.5 : 3.5}" height="${h}"/>`;
        });
    }
    s += `<line class="base" x1="${x0}" x2="${x1}" y1="${y1}" y2="${y1}"/>`;
    [['or', '20160201总流量'], ['bl', '20160201活动流量'], ['mg', '20160128总流量'], ['gr', '20160128活动流量']].forEach(([k, t], i) => {
        const x = 400 + i * 83;
        s += `<rect class="${k}" x="${x}" y="140" width="12" height="8" rx="1"/><text class="c-leg" x="${x + 15}" y="147" textLength="${i % 2 ? 63 : 58}" lengthAdjust="spacingAndGlyphs">${t}</text>`;
    });
    document.getElementById('c6').innerHTML = `<svg width="1128" height="151">${s}</svg>`;
})();

const city = ['哈尔滨市', '大庆', '鸡西', '佳木斯', '伊春', '绥化', '黑河', '牡丹江', '鹤岗', '齐齐哈尔市'];
bars('d1', { w: 566, h: 179, x0: 36, y0: 26, x1: 542, y1: 121, ty: 14, ly: 162, rot: true, title: '各地市用户数分布',
    ticks: ['0 万', '2 万', '4 万', '6 万', '8 万'], cats: city,
    or: [.82, .25, .21, .37, .1, .66, .54, .68, .1, .41], bl: [.41, .23, .11, .19, .07, .58, .6, .32, .05, .28] });
bars('d2', { w: 562, h: 179, x0: 39, y0: 26, x1: 543, y1: 121, ty: 14, ly: 162, rot: true, mark: 315, title: '各地市流量分布图',
    ticks: gb(0, 50, 100, 150, 200, 250, 300), cats: ['哈尔滨市', '大庆', '鸡西', '大兴安岭地区行政公署', '伊春', '绥化', '黑河', '牡丹江', '鹤岗', '齐齐哈尔市'],
    or: [.98, .22, .27, .18, .41, .12, .73, .6, .785, .44], bl: [.34, .18, .1, .09, .17, .06, .3, .465, .285, .22] });
bars('d3', { w: 566, h: 147, x0: 36, y0: 26, x1: 542, y1: 107, ty: 14, ly: 128, title: '品牌',
    ticks: gb(0, 2, 4, 6, 8, 10), cats: ['中心城区', '地铁', '高校'],
    or: [.11, .68, .055], bl: [.165, .83, .055] });
bars('d4', { w: 562, h: 147, x0: 39, y0: 26, x1: 543, y1: 107, ty: 14, ly: 128, title: '地铁',
    ticks: gb(0, 100, 200, 300, 400, 500, 600), cats: ['苹果', '三星', '小米', '其他终端', '酷派'],
    or: [.99, .19, .02, .02, .09], bl: [.66, .125, .01, .01, .075] });

document.getElementById('kpis').innerHTML = [
    ['页面响应成功率(%)', '98', '97.93', '增幅 0.07%'],
    ['页面下载速率(kbps)', '51.27', '54.66', '减幅 6.20%'],
    ['视频类下载速率(kbps)', '148.03', '183.65', '减幅 19.40%'],
    ['即时通信发送成功率(%)', '99.93', '99.96', '减幅 0.03%'],
    ['应用下载速率(kbps)', '442.17', '545.02', '减幅 18.87%']
].map(([t, a, b, f], i) => `<div class="kpi ${i ? '' : 'blue'}"><p>${t}</p><div><span><b>${a}</b>2016-02-01</span><span><b>${b}</b>2016-01-28</span></div><footer>${f}</footer></div>`).join('');

// column settings
const rows = [
    ['地市KEY', 'CITY_KEY', 'Number', '居中', '#dbe5f5'],
    ['隐藏列', 'CITY_ENAME', 'String', '居中', '#c0504d'],
    ['地市中文名列', 'CITY_ZHNAME', 'String', '左对齐', '#d6e3bc'],
    ['省KEY', 'PROVINCE_KEY', 'Number', '居中', '#000000'],
    ['PROVINCE_ENAME', 'PROVINCE_ENAME', 'String', '右对齐', '#95b3d7'],
    ['PROVINCE_ZHNAME', 'PROVINCE_ZHNAME', 'String', '右对齐', '#92cddc'],
    ['START_TIME', 'START_TIME', 'Number', '左对齐', '#538dd5'],
    ['END_TIME', 'END_TIME', 'Number', '左对齐', '#e26b0a'],
    ['TOLL_CODE', 'TOLL_CODE', 'String', '居中', '#ff0000'],
    ['REGION_TYPE', 'REGION_TYPE', 'Number', '居中', '#ffff00']
];
document.getElementById('keys').innerHTML = rows.map(r => `<li><i class="cb ok"></i>${r[0]}</li>`).join('');
document.getElementById('cols').innerHTML =
    '<div class="crow head">' + ['列标题', '数据', '数据类型', '宽度', '是否显示', '显示格式', '对齐方式', '背景颜色', '门限设置', '链接设置'].map(t => `<span>${t}</span>`).join('') + '</div>' +
    rows.map((r, i) => `<div class="crow"><span class="ed">${r[0]}</span><span class="ro">${r[1]}</span><span class="ro">${r[2]}</span><span class="ed"></span>
        <span class="ro ck"><i class="cb ${i === 1 ? '' : 'ok'}"></i></span><span class="dis">${i === 3 ? 'P(2)' : ''}</span><span class="ed al">${r[3]}<i>▾</i></span>
        <span class="ed clr"><svg width="50" height="13"><rect width="50" height="13" fill="${r[4]}"/></svg>▼</span><span class="dis"></span><span class="dis"></span></div>`).join('');
```
